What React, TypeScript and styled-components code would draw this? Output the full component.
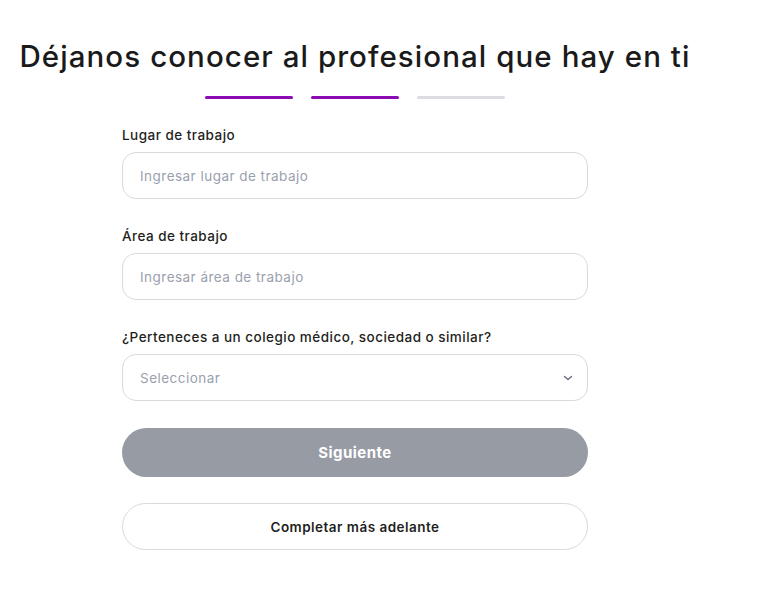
import styled, { createGlobalStyle } from "styled-components"

const GlobalStyle = createGlobalStyle`
  body {
    margin: 0;
    background: #ffffff;
    font-family: Inter, "Noto Sans", sans-serif;
    color: #1c1c1e;
  }
`

const Page = styled.div`
  width: 710px;
  padding-top: 36px;
  display: flex;
  flex-direction: column;
  align-items: center;
`

const Title = styled.h1`
  font-size: 29.5px;
  font-weight: 500;
  letter-spacing: 0.036em;
  color: #1a1a1a;
  margin: 0;
  line-height: 40px;
`

const Steps = styled.div`
  display: flex;
  gap: 18px;
  margin: 20px 0 27px;
`

const Step = styled.div<{ $active?: boolean }>`
  width: 88px;
  height: 3px;
  border-radius: 2px;
  background: ${(p) => (p.$active ? "#8c0cb4" : "#dcdde3")};
`

const Form = styled.form`
  width: 466px;
  display: flex;
  flex-direction: column;
`

const Field = styled.div`
  display: flex;
  flex-direction: column;
  margin-bottom: 28px;
  &:last-of-type {
    margin-bottom: 27px;
  }
`

const Label = styled.label`
  font-size: 13.5px;
  font-weight: 500;
  letter-spacing: 0.035em;
  color: #1f1f22;
  line-height: 18px;
  margin-bottom: 8px;
`

const InputBox = styled.div`
  height: 47px;
  box-sizing: border-box;
  border: 1px solid #d8dade;
  border-radius: 14px;
  display: flex;
  align-items: center;
  padding: 0 13px 0 17px;
  font-size: 13.5px;
  letter-spacing: 0.035em;
  color: #9a9fae;
`

const Placeholder = styled.span`
  flex: 1;
`

const PrimaryButton = styled.button`
  height: 49px;
  border: none;
  border-radius: 25px;
  background: #979ba4;
  color: #ffffff;
  font-family: inherit;
  font-size: 15px;
  font-weight: 700;
  letter-spacing: 0.03em;
`

const SecondaryButton = styled.button`
  height: 47px;
  margin-top: 26px;
  border: 1px solid #d8dade;
  border-radius: 24px;
  background: #ffffff;
  color: #1f1f22;
  font-family: inherit;
  font-size: 13.5px;
  font-weight: 600;
  letter-spacing: 0.035em;
`

function Chevron() {
  return (
    <svg width="12" height="12" viewBox="0 0 12 12" fill="none">
      <path d="M2.5 4.5L6 7.5L9.5 4.5" stroke="#6b7080" strokeWidth="1.4" strokeLinecap="round" strokeLinejoin="round" />
    </svg>
  )
}

export default function App() {
  return (
    <>
      <GlobalStyle />
      <Page>
        <Title>Déjanos conocer al profesional que hay en ti</Title>
        <Steps>
          <Step $active />
          <Step $active />
          <Step />
        </Steps>
        <Form>
          <Field>
            <Label>Lugar de trabajo</Label>
            <InputBox>
              <Placeholder>Ingresar lugar de trabajo</Placeholder>
            </InputBox>
          </Field>
          <Field>
            <Label>Área de trabajo</Label>
            <InputBox>
              <Placeholder>Ingresar área de trabajo</Placeholder>
            </InputBox>
          </Field>
          <Field>
            <Label>¿Perteneces a un colegio médico, sociedad o similar?</Label>
            <InputBox>
              <Placeholder>Seleccionar</Placeholder>
              <Chevron />
            </InputBox>
          </Field>
          <PrimaryButton type="button">Siguiente</PrimaryButton>
          <SecondaryButton type="button">Completar más adelante</SecondaryButton>
        </Form>
      </Page>
    </>
  )
}
